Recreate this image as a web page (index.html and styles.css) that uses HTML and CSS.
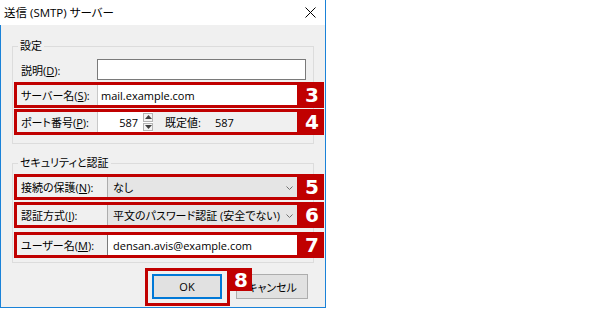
FILE: index.html
```html
<!DOCTYPE html>
<html>
<head>
    <title>送信 (SMTP) サーバー</title>
    <link rel="stylesheet" href="styles.css">
</head>
<body>
    <div class="window">
        <div class="titlebar">
            <span class="title">送信 (SMTP) サーバー</span>
            <svg class="close" width="11" height="11" viewBox="0 0 11 11">
                <path d="M0.5 0.5L10.5 10.5M10.5 0.5L0.5 10.5" stroke="#000" stroke-width="1"/>
            </svg>
        </div>
        <div class="dialog">
            <fieldset class="group">
                <legend>設定</legend>
                <div class="row">
                    <span class="label">説明(<u>D</u>):</span>
                    <div class="textbox desc"></div>
                </div>
                <div class="mark">
                    <div class="mark-box">
                        <span class="label">サーバー名(<u>S</u>):</span>
                        <div class="field">mail.example.com</div>
                    </div>
                    <div class="badge">3</div>
                </div>
                <div class="mark">
                    <div class="mark-box">
                        <span class="label">ポート番号(<u>P</u>):</span>
                        <div class="field port">587</div>
                        <div class="spin">
                            <div class="spin-btn"><svg width="7" height="4" viewBox="0 0 7 4"><path d="M0 4L3.5 0L7 4Z" fill="#404040"/></svg></div>
                            <div class="spin-btn"><svg width="7" height="4" viewBox="0 0 7 4"><path d="M0 0L3.5 4L7 0Z" fill="#404040"/></svg></div>
                        </div>
                        <span class="default-label">既定値:</span>
                        <span class="default-value">587</span>
                    </div>
                    <div class="badge">4</div>
                </div>
            </fieldset>

            <fieldset class="group security">
                <legend>セキュリティと認証</legend>
                <div class="mark">
                    <div class="mark-box">
                        <span class="label wide">接続の保護(<u>N</u>):</span>
                        <div class="combo">なし<svg class="chevron" width="7" height="4" viewBox="0 0 7 4"><path d="M0.5 0.5L3.5 3.5L6.5 0.5" fill="none" stroke="#707070"/></svg></div>
                    </div>
                    <div class="badge">5</div>
                </div>
                <div class="mark second">
                    <div class="mark-box">
                        <span class="label wide">認証方式(<u>I</u>):</span>
                        <div class="combo">平文のパスワード認証 (安全でない)<svg class="chevron" width="7" height="4" viewBox="0 0 7 4"><path d="M0.5 0.5L3.5 3.5L6.5 0.5" fill="none" stroke="#707070"/></svg></div>
                    </div>
                    <div class="badge">6</div>
                </div>
                <div class="mark third">
                    <div class="mark-box">
                        <span class="label wide">ユーザー名(<u>M</u>):</span>
                        <div class="field user">densan.avis@example.com</div>
                    </div>
                    <div class="badge">7</div>
                </div>
            </fieldset>

            <div class="buttons">
                <div class="ok-mark">
                    <div class="button default">OK</div>
                    <div class="badge small">8</div>
                </div>
                <div class="button cancel">キャンセル</div>
            </div>
        </div>
    </div>
</body>
</html>
```

FILE: styles.css
```css
body {
    margin: 0;
    background-color: #fff;
    font-family: "Open Sans", "Noto Sans CJK JP", sans-serif;
    font-size: 11px;
    font-feature-settings: "palt";
    color: #000;
    white-space: nowrap;
}
u {
    text-decoration-thickness: 1px;
    text-underline-offset: 1px;
}
.window {
    width: 326px;
}
.titlebar {
    height: 25px;
    display: flex;
    align-items: center;
    justify-content: space-between;
    padding-left: 4px;
    box-sizing: border-box;
    border-right: 1px solid #1a82d8;
}
.title {
    font-size: 11.5px;
    line-height: 16px;
}
.close {
    margin-right: 9px;
}
.dialog {
    height: 283px;
    box-sizing: border-box;
    background-color: #f0f0f0;
    border: 1px solid #1a82d8;
    border-top: none;
    overflow: hidden;
}
.group {
    width: 302px;
    min-width: 0;
    box-sizing: border-box;
    margin: 13px 0 0 11px;
    padding: 0 0 7px 1px;
    border: 1px solid #dcdcdc;
}
.group legend {
    margin-left: 4px;
    padding: 0 2px;
    line-height: 16px;
}
.security {
    margin-top: 11px;
    padding-bottom: 4px;
}
.row {
    display: flex;
    align-items: center;
    margin-top: 5px;
    margin-bottom: 2px;
}
.row .label {
    width: 83px;
    padding-left: 7px;
    box-sizing: border-box;
}
.textbox {
    height: 21px;
    box-sizing: border-box;
    background-color: #fff;
    border: 1px solid #7a7a7a;
}
.desc {
    width: 209px;
}
.mark {
    display: flex;
    width: 310px;
    height: 26px;
    margin-bottom: 1px;
}
.security .mark {
    margin-top: 3px;
    margin-bottom: 0;
}
.security .mark.second {
    margin-top: 2px;
}
.security .mark.third {
    margin-top: 4px;
}
.mark-box {
    flex: 0 0 286px;
    display: flex;
    align-items: stretch;
    box-sizing: border-box;
    border: 3px solid #c00000;
    overflow: hidden;
}
.mark-box .label {
    flex: 0 0 80px;
    padding-left: 4px;
    box-sizing: border-box;
    display: flex;
    align-items: center;
}
.mark-box .label.wide {
    flex-basis: 90px;
}
.field {
    flex: 1;
    background-color: #fff;
    display: flex;
    align-items: center;
    padding-left: 3px;
    border-left: 1px solid #c8c8c8;
}
.field.port {
    flex: 0 0 46px;
    justify-content: flex-end;
    padding: 0 5px 0 0;
    box-sizing: border-box;
}
.field.user {
    padding-left: 5px;
    border-left-color: #7a7a7a;
}
.spin {
    flex: 0 0 10px;
    display: flex;
    flex-direction: column;
    gap: 1px;
    padding: 1px 0;
    background-color: #fff;
}
.spin-btn {
    flex: 1;
    display: flex;
    align-items: center;
    justify-content: center;
    border: 1px solid #b4b4b4;
    background-color: #f4f4f4;
}
.spin-btn svg {
    display: block;
}
.default-label {
    display: flex;
    align-items: center;
    margin-left: 12px;
    width: 50px;
}
.default-value {
    display: flex;
    align-items: center;
}
.combo {
    flex: 1;
    display: flex;
    align-items: center;
    justify-content: space-between;
    padding: 0 4px 0 5px;
    background-color: #e5e5e5;
    border-left: 1px solid #adadad;
}
.chevron {
    margin-top: 1px;
}
.badge {
    flex: 0 0 24px;
    display: flex;
    align-items: center;
    justify-content: center;
    background-color: #c00000;
    color: #fff;
    font-family: "DejaVu Sans", sans-serif;
    font-weight: bold;
    font-size: 20px;
}
.buttons {
    display: flex;
    align-items: flex-start;
    margin: 5px 0 0 144px;
}
.ok-mark {
    position: relative;
    border: 3px solid #c00000;
    padding: 3px 5px 4px 4px;
}
.button {
    height: 25px;
    box-sizing: border-box;
    display: flex;
    align-items: center;
    justify-content: center;
    background-color: #e1e1e1;
    border: 1px solid #adadad;
}
.button.default {
    width: 70px;
    border-color: #0078d7;
    box-shadow: inset 0 0 0 1px #0078d7;
}
.button.cancel {
    width: 72px;
    margin: 6px 0 0 6px;
}
.badge.small {
    position: absolute;
    left: calc(100% + 3px);
    top: -3px;
    width: 22px;
    height: 23px;
}
```
